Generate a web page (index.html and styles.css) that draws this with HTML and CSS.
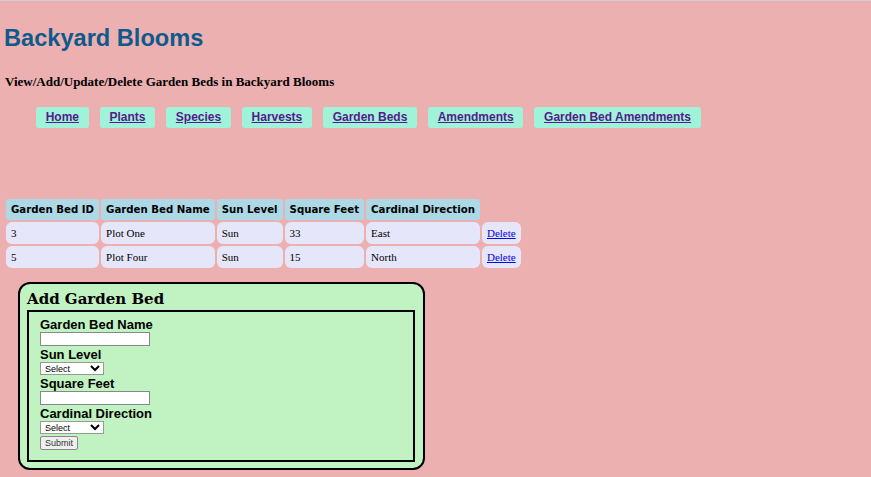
FILE: index.html
```html
<!DOCTYPE html>
<html lang="en">
<head>
<meta charset="utf-8">
<title>Garden Beds - Backyard Blooms</title>
<link rel="stylesheet" href="styles.css">
</head>
<body>
<h1 class="site-title">Backyard Blooms</h1>
<p class="subtitle">View/Add/Update/Delete Garden Beds in Backyard Blooms</p>
<nav class="nav">
  <a href="#home">Home</a>
  <a href="#plants">Plants</a>
  <a href="#species">Species</a>
  <a href="#harvests">Harvests</a>
  <a href="#beds">Garden Beds</a>
  <a href="#amendments">Amendments</a>
  <a href="#bed-amendments">Garden Bed Amendments</a>
</nav>
<table class="beds">
  <thead>
    <tr><th>Garden Bed ID</th><th>Garden Bed Name</th><th>Sun Level</th><th>Square Feet</th><th>Cardinal Direction</th></tr>
  </thead>
  <tbody>
    <tr><td>3</td><td>Plot One</td><td>Sun</td><td>33</td><td>East</td><td><a class="del" href="#d3">Delete</a></td></tr>
    <tr><td>5</td><td>Plot Four</td><td>Sun</td><td>15</td><td>North</td><td><a class="del" href="#d5">Delete</a></td></tr>
  </tbody>
</table>
<div class="add-box">
  <h2 class="add-title">Add Garden Bed</h2>
  <form class="add-form">
    <label class="lbl" for="name">Garden Bed Name</label>
    <input class="txt" type="text" id="name">
    <label class="lbl" for="sun">Sun Level</label>
    <select class="sel" id="sun"><option>Select</option></select>
    <label class="lbl" for="sq">Square Feet</label>
    <input class="txt" type="text" id="sq">
    <label class="lbl" for="dir">Cardinal Direction</label>
    <select class="sel" id="dir"><option>Select</option></select>
    <button class="btn" type="button">Submit</button>
  </form>
</div>
</body>
</html>
```
FILE: styles.css
```css
html { background: #ecb0b0; }
body {
  margin: 0;
  border-top: 1px solid #cfcfcf;
  padding: 0 4px;
  background: #ecb0b0;
  font-family: "Liberation Serif", serif;
}
.site-title {
  margin: 20px 0 0 0;
  font-family: "Liberation Sans", Arial, sans-serif;
  font-size: 23.6px;
  line-height: 34px;
  color: #0f5a8c;
}
.subtitle {
  margin: 19px 0 0 1px;
  font-size: 13px;
  font-weight: bold;
  line-height: 16px;
  color: #000;
}
.nav {
  display: flex;
  gap: 11px;
  margin: 17px 0 0 32px;
}
.nav a {
  display: block;
  background: #9ff3d9;
  color: #551a8b;
  font-family: "Liberation Sans", Arial, sans-serif;
  font-weight: bold;
  font-size: 12px;
  line-height: 15px;
  padding: 3px 9.7px;
  border-radius: 3px;
  height: 15px;
}
.beds {
  margin-top: 69px;
  border-spacing: 2px;
}
.beds th {
  background: #add8e6;
  font-family: "DejaVu Sans", Verdana, sans-serif;
  font-size: 10.2px;
  font-weight: bold;
  text-align: left;
  padding: 4px 5px;
  border-radius: 3px;
  height: 13px;
}
.beds td {
  background: #e6e6fa;
  font-size: 11px;
  padding: 4px 5px;
  border-radius: 6px;
  height: 14px;
}
.beds .del { color: #0000ee; }
.add-box {
  width: 388px;
  margin: 12px 0 0 14px;
  border: 2px solid #000;
  border-radius: 12px;
  background: #c1f2c1;
  padding: 0 8px 6px 7px;
}
.add-title {
  margin: 6px 0 2px;
  font-family: "DejaVu Serif", "Liberation Serif", serif;
  font-size: 15px;
  line-height: 18px;
}
.add-form {
  display: flex;
  flex-direction: column;
  align-items: flex-start;
  border: 2px solid #000;
  padding: 5px 11px 10px;
}
.lbl {
  font-family: "Liberation Sans", Arial, sans-serif;
  font-weight: bold;
  font-size: 13px;
  line-height: 15px;
}
.txt {
  width: 108px;
  height: 12px;
  padding: 0;
  border: 1px solid #888;
  margin: 0 0 1px;
  font-size: 9px;
}
.sel {
  width: 64px;
  height: 13px;
  padding: 0;
  font-size: 9px;
  font-family: "Liberation Sans", Arial, sans-serif;
  border: 1px solid #999;
  background: #fff;
  margin: 0 0 1px;
}
.btn {
  margin-top: 1px;
  font-size: 9px;
  font-family: "Liberation Sans", Arial, sans-serif;
  padding: 1px 4px;
  border: 1px solid #888;
  background: #efefef;
  color: #333;
  border-radius: 2px;
}
```
